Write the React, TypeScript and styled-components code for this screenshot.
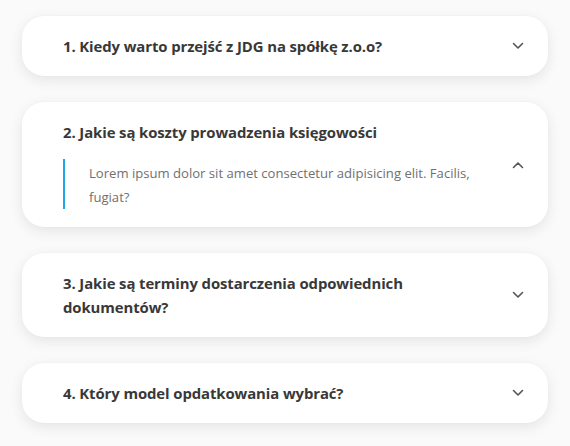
import React from "react";
import styled, { createGlobalStyle } from "styled-components";

const Global = createGlobalStyle`
  html, body { margin: 0; padding: 0; background: #fafafa; }
  body { font-family: "Open Sans", "Noto Sans", sans-serif; }
`;

const List = styled.div`
  display: flex;
  flex-direction: column;
  gap: 26px;
  padding: 16px 22px 20px;
`;

const Card = styled.div`
  display: flex;
  align-items: center;
  background: #fff;
  border-radius: 22px;
  box-shadow: 0 4px 14px rgba(0, 0, 0, 0.09), 0 0 2px rgba(0, 0, 0, 0.03);
  padding: 18px 24px 18px 41px;
`;

const Content = styled.div`
  flex: 1;
  display: flex;
  flex-direction: column;
  gap: 15px;
  padding-right: 20px;
`;

const Title = styled.div`
  font-family: "Open Sans", sans-serif;
  font-weight: 700;
  font-size: 14.9px;
  line-height: 24px;
  color: #383838;
  letter-spacing: -0.1px;
`;

const Body = styled.div`
  border-left: 2px solid #1fa6e8;
  padding: 2px 0 0 24px;
  font-family: "Open Sans", sans-serif;
  font-size: 13.1px;
  line-height: 24px;
  color: #707070;
`;

const Chevron = styled.svg`
  width: 12px;
  height: 8px;
  flex: none;
`;

const Icon = ({ up }: { up?: boolean }) => (
  <Chevron viewBox="0 0 12 8">
    <path
      d={up ? "M1.5 6.5 L6 2 L10.5 6.5" : "M1.5 1.5 L6 6 L10.5 1.5"}
      fill="none"
      stroke="#555"
      strokeWidth="1.6"
      strokeLinecap="round"
      strokeLinejoin="round"
    />
  </Chevron>
);

const items = [
  { q: "1. Kiedy warto przejść z JDG na spółkę z.o.o?" },
  {
    q: "2. Jakie są koszty prowadzenia księgowości",
    a: "Lorem ipsum dolor sit amet consectetur adipisicing elit. Facilis, fugiat?",
  },
  { q: "3. Jakie są terminy dostarczenia odpowiednich dokumentów?" },
  { q: "4. Który model opdatkowania wybrać?" },
];

export default function App() {
  return (
    <>
      <Global />
      <List>
        {items.map((it) => (
          <Card key={it.q}>
            <Content>
              <Title>{it.q}</Title>
              {it.a && <Body>{it.a}</Body>}
            </Content>
            <Icon up={!!it.a} />
          </Card>
        ))}
      </List>
    </>
  );
}
